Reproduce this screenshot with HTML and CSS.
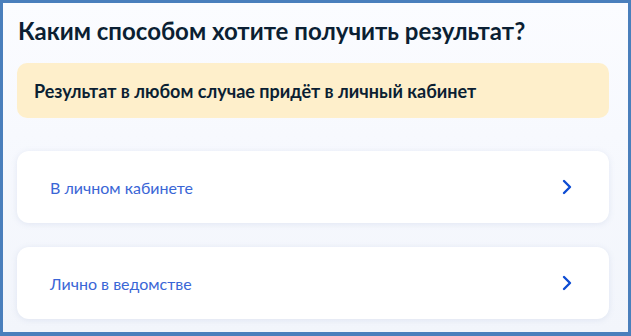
FILE: index.html
```html
<!DOCTYPE html>
<html lang="ru">
<head>
<meta charset="utf-8">
<link rel="stylesheet" href="styles.css">
</head>
<body>
<div class="frame">
  <h1 class="title">Каким способом хотите получить результат?</h1>
  <div class="notice">Результат в любом случае придёт в личный кабинет</div>
  <div class="options">
    <a class="option" href="#">
      <span class="option-text">В личном кабинете</span>
      <svg class="chev" width="10" height="16" viewBox="0 0 10 16"><path d="M2 2 L8 8 L2 14" fill="none" stroke="#0d4cd3" stroke-width="2.4" stroke-linecap="round" stroke-linejoin="round"/></svg>
    </a>
    <a class="option" href="#">
      <span class="option-text">Лично в ведомстве</span>
      <svg class="chev" width="10" height="16" viewBox="0 0 10 16"><path d="M2 2 L8 8 L2 14" fill="none" stroke="#0d4cd3" stroke-width="2.4" stroke-linecap="round" stroke-linejoin="round"/></svg>
    </a>
  </div>
</div>
</body>
</html>
```
FILE: styles.css
```css
html, body {
  margin: 0;
  padding: 0;
}
body {
  width: 631px;
  height: 336px;
  font-family: Lato, "Noto Sans", sans-serif;
  background: #4a7fbc;
}
.frame {
  box-sizing: border-box;
  width: 631px;
  height: 336px;
  border-style: solid;
  border-color: #4a7fbc;
  border-width: 3px 3px 4px 3px;
  background: linear-gradient(180deg, #fbfcff 0%, #f7f9fe 40%, #f2f5fb 100%);
  padding: 0 19px 0 14px;
  display: flex;
  flex-direction: column;
}
.title {
  margin: 12px 0 0 1px;
  font-size: 24px;
  line-height: 32px;
  font-weight: 700;
  color: #0b1f33;
}
.notice {
  margin-top: 16px;
  height: 55px;
  box-sizing: border-box;
  background: #feefcb;
  border-radius: 10px;
  padding: 0 17px;
  display: flex;
  align-items: center;
  font-size: 18px;
  font-weight: 700;
  color: #0b1f33;
}
.options {
  margin-top: 33px;
  display: flex;
  flex-direction: column;
  gap: 24px;
}
.option {
  height: 72px;
  box-sizing: border-box;
  background: #fff;
  border-radius: 12px;
  box-shadow: 0 1px 6px rgba(105, 130, 180, 0.14);
  display: flex;
  align-items: center;
  justify-content: space-between;
  padding: 0 37px 0 33px;
  text-decoration: none;
}
.option-text {
  font-size: 16px;
  color: #3a66d6;
}
.chev {
  display: block;
}
```
